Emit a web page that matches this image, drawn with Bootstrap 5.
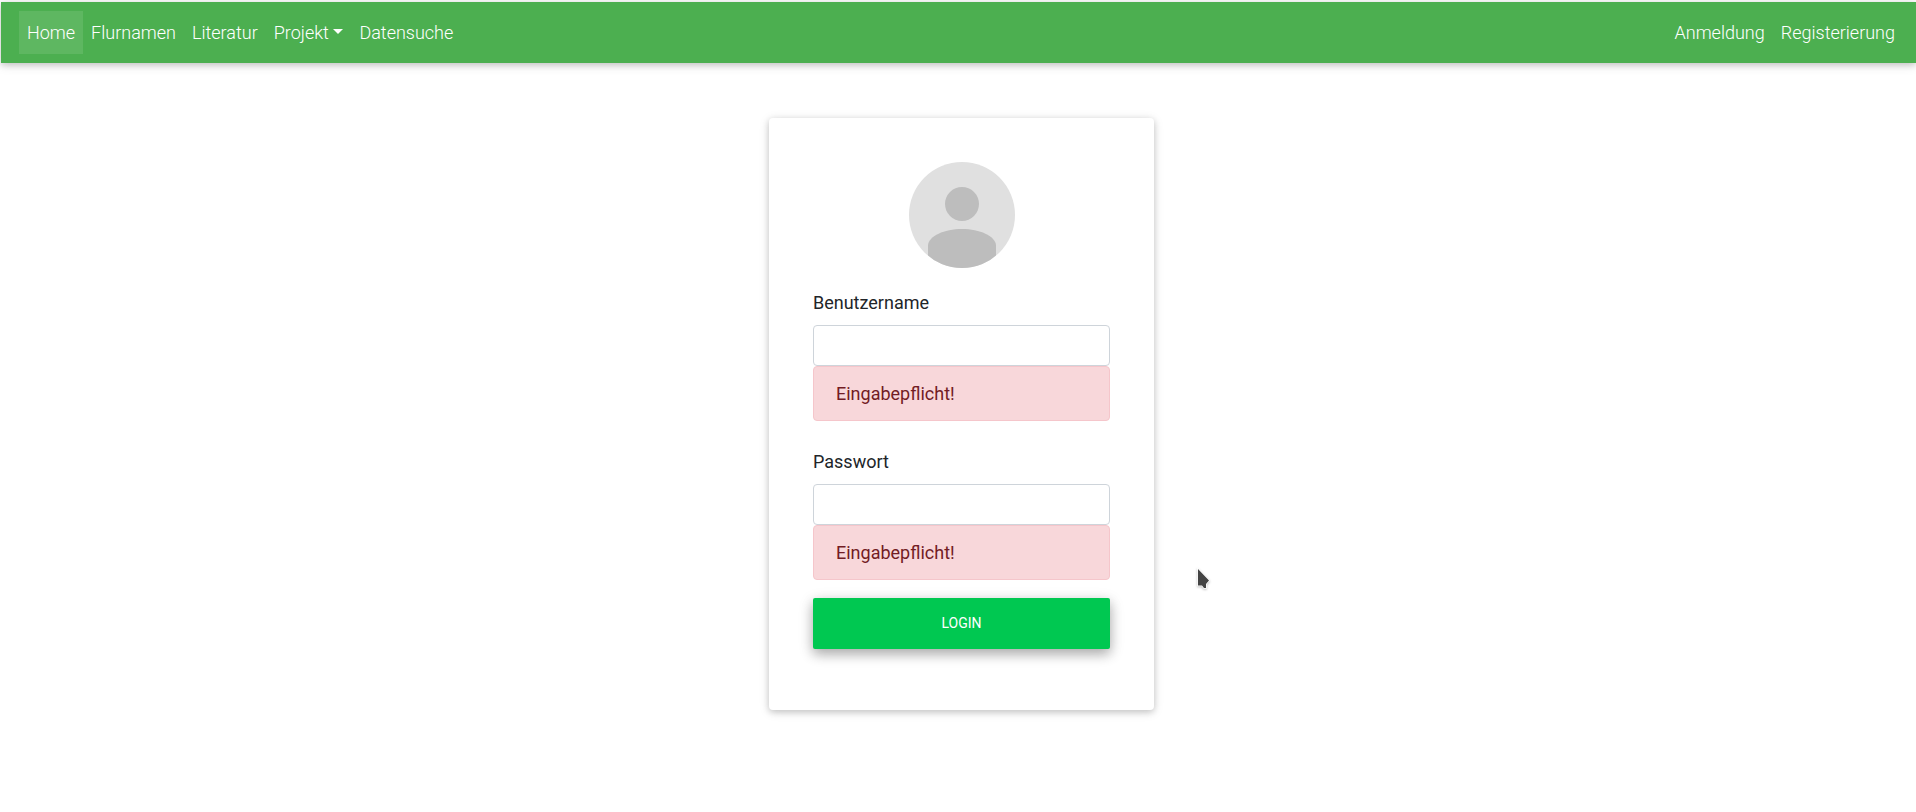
<!DOCTYPE html>
<html lang="de">
<head>
<meta charset="utf-8">
<meta name="viewport" content="width=device-width, initial-scale=1">
<title>Anmeldung</title>
<link href="https://cdn.jsdelivr.net/npm/bootstrap@5.3.0/dist/css/bootstrap.min.css" rel="stylesheet">
<style>
  body { font-family: Roboto, sans-serif; font-size: 18px; line-height: 26px; color: #212529; background: #fff; padding: 2px 0 0 1px; }
  .site-nav { background: #4caf50; padding: 9px 13px 9px 18px; font-weight: 300; box-shadow: 0 2px 6px rgba(0,0,0,.16), 0 2px 11px rgba(0,0,0,.12); }
  .site-nav .nav-link { color: #fff; font-size: 18px; padding: 9px; line-height: 25px; }
  .site-nav .nav-link.active { color: #fff; background: rgba(255,255,255,.1); }
  .login-area { padding: 55px 0 55px 6px; }
  .login-card { width: 385px; max-width: 100%; border: 0; border-radius: 4px; padding: 44px 44px 61px; box-shadow: 0 2px 6px rgba(0,0,0,.16), 0 2px 11px rgba(0,0,0,.12); }
  .avatar { width: 106px; height: 106px; margin-bottom: 22px; }
  .login-card label { margin-bottom: 9px; }
  .login-card .form-control { height: 41px; border-color: #ced4da; border-radius: 4px; font-size: 18px; }
  .login-card .alert { padding: 14px 22px; line-height: 25px; border-radius: 4px; color: #721c24; background: #f8d7da; border-color: #f5c6cb; }
  .field + .field { margin-top: 28px; }
  .btn-login { margin-top: 18px; height: 51px; border: 0; border-radius: 2px; color: #fff; background: #00c851; font-size: 14px; text-transform: uppercase; box-shadow: 0 5px 12px rgba(0,0,0,.22), 0 4px 15px rgba(0,0,0,.17); }
  .btn-login:hover { color: #fff; background: #00d657; }
  .pointer { left: 1196px; top: 567px; filter: drop-shadow(0 1px 1px rgba(0,0,0,.25)); pointer-events: none; }
</style>
<script src="https://cdn.jsdelivr.net/npm/bootstrap@5.3.0/dist/js/bootstrap.bundle.min.js" defer></script>
</head>
<body>
<nav class="navbar navbar-expand-md navbar-dark site-nav">
  <ul class="navbar-nav me-auto">
    <li class="nav-item"><a class="nav-link active" aria-current="page" href="#">Home</a></li>
    <li class="nav-item"><a class="nav-link" href="#">Flurnamen</a></li>
    <li class="nav-item"><a class="nav-link" href="#">Literatur</a></li>
    <li class="nav-item dropdown"><a class="nav-link dropdown-toggle" href="#" role="button" data-bs-toggle="dropdown" aria-expanded="false">Projekt</a></li>
    <li class="nav-item"><a class="nav-link" href="#">Datensuche</a></li>
  </ul>
  <ul class="navbar-nav">
    <li class="nav-item"><a class="nav-link" href="#">Anmeldung</a></li>
    <li class="nav-item"><a class="nav-link" href="#">Registerierung</a></li>
  </ul>
</nav>

<main class="login-area d-flex justify-content-center">
  <form class="card login-card" onsubmit="return false">
    <svg class="avatar d-block mx-auto" viewBox="0 0 106 106" aria-hidden="true">
      <defs><clipPath id="disc"><circle cx="53" cy="53" r="53"/></clipPath></defs>
      <circle cx="53" cy="53" r="53" fill="#e0e0e0"/>
      <g fill="#bdbdbd" clip-path="url(#disc)">
        <circle cx="53" cy="42" r="17"/>
        <path d="M19 106V83C20 74 35 67 53 67S86 74 87 83V106Z"/>
      </g>
    </svg>
    <div class="field">
      <label class="d-block" for="username">Benutzername</label>
      <input class="form-control" type="text" id="username" name="username">
      <div class="alert alert-danger mb-0" role="alert">Eingabepflicht!</div>
    </div>
    <div class="field">
      <label class="d-block" for="password">Passwort</label>
      <input class="form-control" type="password" id="password" name="password">
      <div class="alert alert-danger mb-0" role="alert">Eingabepflicht!</div>
    </div>
    <button class="btn btn-login w-100" type="submit">Login</button>
  </form>
</main>

<svg class="pointer position-absolute" width="16" height="24" viewBox="0 0 16 24" aria-hidden="true">
  <path d="M2 2V18.500H6L8 21H10V17L13 13.500Z" fill="#444" stroke="#fff" stroke-width="1.500" paint-order="stroke"/>
</svg>
</body>
</html>
